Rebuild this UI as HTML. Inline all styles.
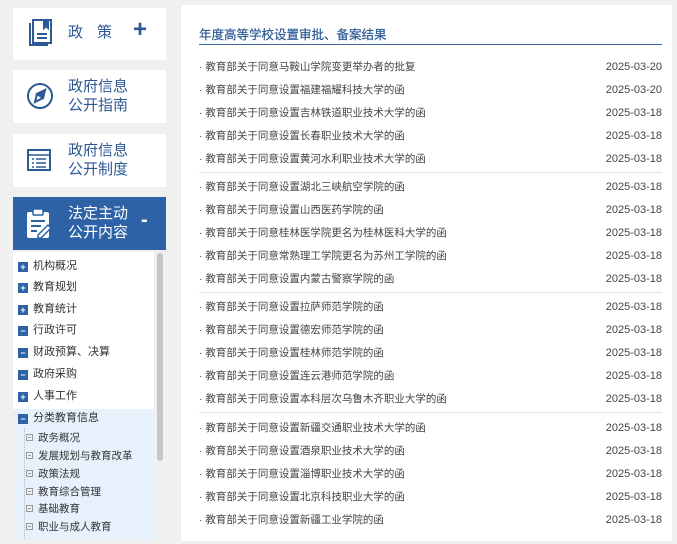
<!DOCTYPE html>
<html><head><meta charset="utf-8"><style>
*{margin:0;padding:0;box-sizing:border-box}
body{width:677px;height:544px;background:#f0f0f0;font-family:"Liberation Sans","Noto Sans CJK SC",sans-serif;position:relative;overflow:hidden;color:#333}
.box{position:absolute;left:13px;width:153px;background:#fff;color:#2c5a94}
.box .t{position:absolute;left:55px;font-size:15px;line-height:19px}
.blue{background:#2d62a6;color:#fff}
.tree{position:absolute;left:13px;top:252px;width:141px;height:288px;background:#fff}
.sb{position:absolute;left:157px;top:253px;width:6px;height:208px;background:#c6c6c6;border-radius:3px}
.ti{position:absolute;left:18px;font-size:11px;line-height:14px;color:#333;white-space:nowrap}
.ti i{display:inline-block;width:10px;height:10px;background:#2d62a6;color:#fff;font-style:normal;font-size:9px;line-height:10px;text-align:center;margin-right:5px;vertical-align:-1px;font-weight:bold}
.si{position:absolute;left:26px;font-size:10.5px;line-height:14px;color:#333;white-space:nowrap}
.si b{display:inline-block;width:7px;height:7px;border:1px solid #999;margin-right:5px;vertical-align:0;position:relative}
.si b:after{content:"";position:absolute;left:1px;top:2px;width:3px;height:1px;background:#999}
.main{position:absolute;left:181px;top:5px;width:491px;height:536px;background:#fff}
.h{position:absolute;left:18px;top:23px;font-size:12.5px;color:#2c5a94;line-height:15px;-webkit-text-stroke:0.2px #2c5a94}
.hl{position:absolute;left:18px;top:39px;width:463px;height:1px;background:#3c6aa5}
.r{position:absolute;left:18px;width:463px;font-size:10.5px;line-height:14px;color:#444}
.r span{position:absolute;right:0;top:0;font-size:11px}
.sep{position:absolute;left:18px;width:463px;height:1px;background:#e2e2e2}
</style></head><body>
<div class="box" style="top:8px;height:52px">
<svg style="position:absolute;left:13px;top:10px" width="28" height="32" viewBox="0 0 28 32" fill="none" stroke="#2c5a94" stroke-width="2"><path d="M4 5v22h18"/><rect x="7" y="2" width="18" height="23"/><path d="M18 2v8l2-2 2 2V2" fill="#2c5a94"/><path d="M11 16h10M11 20h10"/></svg>
<div class="t" style="top:15px;letter-spacing:14px">政策</div>
<div style="position:absolute;left:120px;top:8px;font-size:24px;font-weight:bold;color:#2c5a94">+</div>
</div>
<div class="box" style="top:70px;height:53px">
<svg style="position:absolute;left:13px;top:12px" width="28" height="28" viewBox="0 0 28 28" fill="none" stroke="#2c5a94" stroke-width="2"><circle cx="14" cy="14" r="12"/><path d="M19 8l-8 4-2 8 8-4z" fill="#fff"/><path d="M19 8l-8 4 6 4z" fill="#2c5a94"/></svg>
<div class="t" style="top:7px">政府信息<br>公开指南</div>
</div>
<div class="box" style="top:134px;height:53px">
<svg style="position:absolute;left:13px;top:13px" width="26" height="26" viewBox="0 0 26 26" fill="none" stroke="#2c5a94" stroke-width="2"><rect x="2" y="3" width="22" height="20"/><path d="M2 8h22M6 12h2M10 12h10M6 16h2M10 16h10M6 20h2M10 20h10" stroke-width="1.6"/></svg>
<div class="t" style="top:7px">政府信息<br>公开制度</div>
</div>
<div class="box blue" style="top:197px;height:53px">
<svg style="position:absolute;left:13px;top:11px" width="26" height="32" viewBox="0 0 26 32"><rect x="1" y="4" width="22" height="26" rx="2" fill="#fff"/><rect x="7" y="1" width="10" height="6" rx="1" fill="#fff" stroke="#2d62a6" stroke-width="1.5"/><path d="M5 13h14M5 18h10M5 23h6" stroke="#2d62a6" stroke-width="2"/><path d="M12 27l10-10 3 3-10 10h-3z" fill="#fff" stroke="#2d62a6" stroke-width="1.5"/></svg>
<div class="t" style="top:7px;color:#fff">法定主动<br>公开内容</div>
<div style="position:absolute;left:128px;top:12px;font-size:20px;font-weight:bold;color:#fff">-</div>
</div>
<div class="tree"></div>
<div style="position:absolute;left:13px;top:409px;width:141px;height:131px;background:#e6f1fb"></div>
<div style="position:absolute;left:24px;top:428px;width:0;height:112px;border-left:1px dotted #bbb"></div>
<div class="sb"></div>
<div class="ti" style="top:259px"><i>+</i>机构概况</div>
<div class="ti" style="top:280px"><i>+</i>教育规划</div>
<div class="ti" style="top:302px"><i>+</i>教育统计</div>
<div class="ti" style="top:323px"><i>−</i>行政许可</div>
<div class="ti" style="top:345px"><i>−</i>财政预算、决算</div>
<div class="ti" style="top:367px"><i>−</i>政府采购</div>
<div class="ti" style="top:389px"><i>+</i>人事工作</div>
<div class="ti" style="top:411px"><i>−</i>分类教育信息</div>
<div class="si" style="top:431px"><b></b>政务概况</div>
<div class="si" style="top:449px"><b></b>发展规划与教育改革</div>
<div class="si" style="top:467px"><b></b>政策法规</div>
<div class="si" style="top:485px"><b></b>教育综合管理</div>
<div class="si" style="top:502px"><b></b>基础教育</div>
<div class="si" style="top:520px"><b></b>职业与成人教育</div>
<div class="main">
<div class="h">年度高等学校设置审批、备案结果</div>
<div class="hl"></div>
<div class="r" style="top:55px">· 教育部关于同意马鞍山学院变更举办者的批复<span>2025-03-20</span></div>
<div class="r" style="top:78px">· 教育部关于同意设置福建福耀科技大学的函<span>2025-03-20</span></div>
<div class="r" style="top:101px">· 教育部关于同意设置吉林铁道职业技术大学的函<span>2025-03-18</span></div>
<div class="r" style="top:124px">· 教育部关于同意设置长春职业技术大学的函<span>2025-03-18</span></div>
<div class="r" style="top:147px">· 教育部关于同意设置黄河水利职业技术大学的函<span>2025-03-18</span></div>
<div class="sep" style="top:167px"></div>
<div class="r" style="top:175px">· 教育部关于同意设置湖北三峡航空学院的函<span>2025-03-18</span></div>
<div class="r" style="top:198px">· 教育部关于同意设置山西医药学院的函<span>2025-03-18</span></div>
<div class="r" style="top:221px">· 教育部关于同意桂林医学院更名为桂林医科大学的函<span>2025-03-18</span></div>
<div class="r" style="top:244px">· 教育部关于同意常熟理工学院更名为苏州工学院的函<span>2025-03-18</span></div>
<div class="r" style="top:267px">· 教育部关于同意设置内蒙古警察学院的函<span>2025-03-18</span></div>
<div class="sep" style="top:287px"></div>
<div class="r" style="top:295px">· 教育部关于同意设置拉萨师范学院的函<span>2025-03-18</span></div>
<div class="r" style="top:318px">· 教育部关于同意设置德宏师范学院的函<span>2025-03-18</span></div>
<div class="r" style="top:341px">· 教育部关于同意设置桂林师范学院的函<span>2025-03-18</span></div>
<div class="r" style="top:364px">· 教育部关于同意设置连云港师范学院的函<span>2025-03-18</span></div>
<div class="r" style="top:387px">· 教育部关于同意设置本科层次乌鲁木齐职业大学的函<span>2025-03-18</span></div>
<div class="sep" style="top:407px"></div>
<div class="r" style="top:416px">· 教育部关于同意设置新疆交通职业技术大学的函<span>2025-03-18</span></div>
<div class="r" style="top:439px">· 教育部关于同意设置酒泉职业技术大学的函<span>2025-03-18</span></div>
<div class="r" style="top:462px">· 教育部关于同意设置淄博职业技术大学的函<span>2025-03-18</span></div>
<div class="r" style="top:485px">· 教育部关于同意设置北京科技职业大学的函<span>2025-03-18</span></div>
<div class="r" style="top:508px">· 教育部关于同意设置新疆工业学院的函<span>2025-03-18</span></div>
</div>
</body></html>
